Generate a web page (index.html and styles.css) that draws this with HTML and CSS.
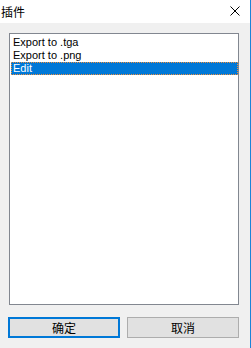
FILE: index.html
```html
<!DOCTYPE html>
<html lang="zh">
<head>
    <meta charset="UTF-8">
    <title>插件</title>
<link rel="stylesheet" href="styles.css">
</head>
<body>
    <div class="window">
        <div class="titlebar">
            <span class="title">插件</span>
            <span class="close">
                <svg width="10" height="10" viewBox="0 0 10 10">
                    <path d="M0.5 0.5 L9.5 9.5 M9.5 0.5 L0.5 9.5" stroke="#000" stroke-width="1" fill="none"/>
                </svg>
            </span>
        </div>
        <div class="content">
            <div class="listbox">
                <div class="item">Export to .tga</div>
                <div class="item">Export to .png</div>
                <div class="item selected">Edit</div>
            </div>
            <div class="buttons">
                <button class="btn default">确定</button>
                <button class="btn">取消</button>
            </div>
        </div>
    </div>
</body>
</html>
```

FILE: styles.css
```css
body{
    margin: 0;
    background-color: #f0f0f0;
}
.window{
    width: 250px;
    height: 348px;
    border-right: 1px solid #1a84d8;
    background-color: #f0f0f0;
    display: flex;
    flex-direction: column;
}
.titlebar{
    height: 23px;
    background-color: #ffffff;
    display: flex;
    align-items: center;
    justify-content: space-between;
}
.title{
    font-family: "Noto Sans CJK SC", sans-serif;
    font-size: 12px;
    padding-left: 1px;
    padding-bottom: 1px;
    color: #000;
}
.close{
    display: flex;
    margin-right: 10px;
    margin-bottom: 1px;
}
.content{
    display: flex;
    flex-direction: column;
}
.listbox{
    margin: 10px 11px 0 9px;
    height: 268px;
    border: 1px solid #828790;
    background-color: #ffffff;
    padding: 2px 0 0 1px;
}
.item{
    font-family: "Liberation Sans", Arial, sans-serif;
    font-size: 11px;
    line-height: 13px;
    height: 13px;
    padding-left: 2px;
    color: #000;
}
.selected{
    background-color: #0078d7;
    color: #ffffff;
    outline: 1px dotted #f0903c;
    outline-offset: -1px;
}
.buttons{
    display: flex;
    gap: 7px;
    margin-top: 12px;
    padding-left: 8px;
}
.btn{
    width: 112px;
    height: 21px;
    margin: 0;
    padding: 0;
    background-color: #e1e1e1;
    border: 1px solid #adadad;
    font-family: "Noto Sans CJK SC", sans-serif;
    font-size: 12px;
    color: #000;
}
.default{
    border: 2px solid #0078d7;
}
```
